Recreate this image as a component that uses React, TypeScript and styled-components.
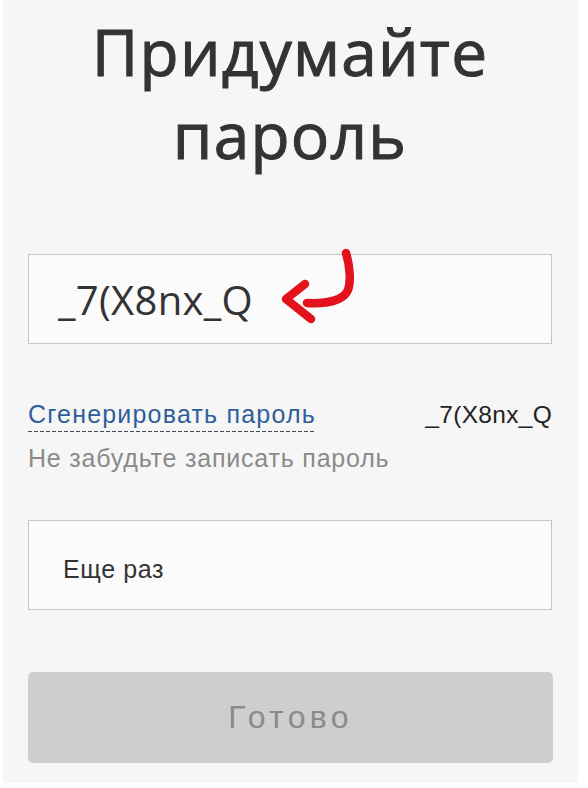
import React from "react";
import styled, { createGlobalStyle } from "styled-components";

const Global = createGlobalStyle`
  html, body { margin: 0; padding: 0; background: #ffffff; }
  body { width: 588px; height: 788px; overflow: hidden; }
  * { box-sizing: border-box; }
`;

const Panel = styled.main`
  margin: 0 10px 0 3px;
  height: 783px;
  background: #f6f6f6;
  padding: 10px 26px 0 25px;
  display: flex;
  flex-direction: column;
`;

const Title = styled.h1`
  margin: 0;
  font-family: "Open Sans", "Noto Sans", sans-serif;
  font-weight: 400;
  font-size: 64px;
  line-height: 83px;
  color: #333333;
  -webkit-text-stroke: 1px #333333;
  text-align: center;
  letter-spacing: 1.2px;
`;

const FieldWrap = styled.div<{ $top: number }>`
  position: relative;
  margin-top: ${(p) => p.$top}px;
`;

const Field = styled.input<{ $big?: boolean }>`
  display: block;
  width: 524px;
  height: 90px;
  margin: 0;
  border: 1px solid #c6c6c6;
  border-radius: 0;
  background: #fbfbfb;
  outline: none;
  color: #333333;
  font-family: ${(p) =>
    p.$big ? `"Open Sans", "Noto Sans", sans-serif` : `"Liberation Sans", Arial, sans-serif`};
  font-size: ${(p) => (p.$big ? 40 : 25)}px;
  letter-spacing: ${(p) => (p.$big ? 0.3 : 0.6)}px;
  padding: ${(p) => (p.$big ? "0 0 0 29px" : "9px 0 0 34px")};
  &::placeholder { color: #333333; opacity: 1; }
`;

const Arrow = styled.svg`
  position: absolute;
  left: 250px;
  top: -10px;
  width: 110px;
  height: 80px;
  overflow: visible;
  pointer-events: none;
`;

const LinkRow = styled.div`
  margin-top: 56px;
  display: flex;
  justify-content: space-between;
  align-items: baseline;
  font-family: "Liberation Sans", Arial, sans-serif;
`;

const GenLink = styled.a`
  display: inline-block;
  font-size: 25px;
  line-height: 28px;
  padding-bottom: 4px;
  color: #2f5f9b;
  text-decoration: none;
  background-image: linear-gradient(to right, #3c4a5c 0 4px, transparent 4px 6px);
  background-size: 6px 1px;
  background-repeat: repeat-x;
  background-position: 0 100%;
  letter-spacing: 1.2px;
`;

const Generated = styled.span`
  font-size: 24.5px;
  line-height: 28px;
  color: #222222;
  letter-spacing: 0.3px;
`;

const Hint = styled.p`
  margin: 12px 0 0;
  font-family: "Liberation Sans", Arial, sans-serif;
  font-size: 25px;
  line-height: 28px;
  color: #8a8a8a;
  letter-spacing: 0.8px;
`;

const Submit = styled.button`
  margin-top: 62px;
  width: 525px;
  height: 91px;
  border: none;
  border-radius: 5px;
  background: #cecece;
  color: #8b8b8b;
  font-family: "Liberation Sans", Arial, sans-serif;
  font-size: 32px;
  letter-spacing: 4.3px;
  padding: 0;
  cursor: default;
`;

export default function App() {
  return (
    <>
      <Global />
      <Panel>
        <Title>
          Придумайте
          <br />
          пароль
        </Title>
        <FieldWrap $top={78}>
          <Field $big readOnly value="_7(X8nx_Q" />
          <Arrow viewBox="0 0 110 80">
            <g
              fill="none"
              stroke="#e3121c"
              strokeWidth="8.5"
              strokeLinecap="round"
              strokeLinejoin="round"
            >
              <path d="M68 9 C 72 22, 73 38, 70 46 C 66 56, 50 60, 29 59" />
              <path d="M27 40 L 8 55 L 33 75" />
            </g>
          </Arrow>
        </FieldWrap>
        <LinkRow>
          <GenLink href="#">Сгенерировать пароль</GenLink>
          <Generated>_7(X8nx_Q</Generated>
        </LinkRow>
        <Hint>Не забудьте записать пароль</Hint>
        <FieldWrap $top={48}>
          <Field placeholder="Еще раз" />
        </FieldWrap>
        <Submit type="button">Готово</Submit>
      </Panel>
    </>
  );
}
